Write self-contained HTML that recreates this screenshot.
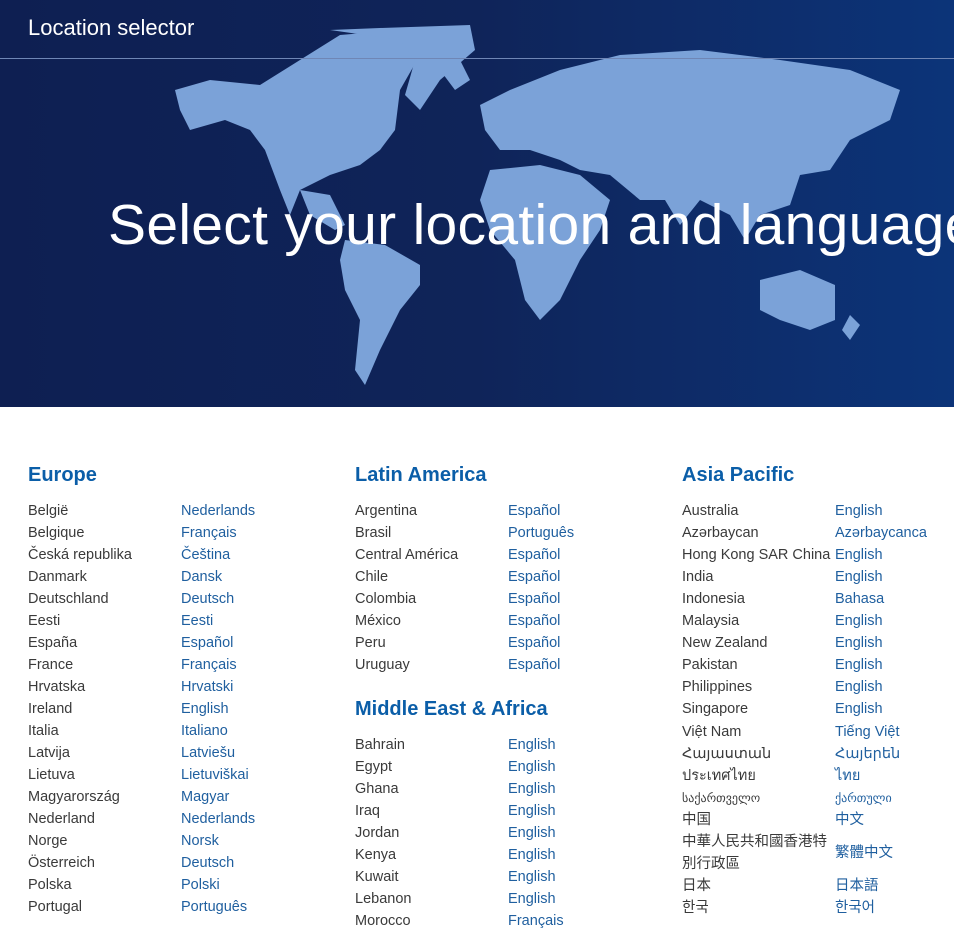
<!DOCTYPE html>
<html><head><meta charset="utf-8"><style>
*{margin:0;padding:0;box-sizing:border-box}
body{width:954px;height:917px;overflow:hidden;background:#fff;font-family:"Liberation Sans","Noto Sans CJK SC",sans-serif}
.hero{position:relative;height:407px;background:linear-gradient(90deg,#0e1f52 0%,#0f2459 50%,#0c3479 100%);overflow:hidden}
.hero svg{position:absolute;left:0;top:0}
.top{position:absolute;left:28px;top:15px;color:#fff;font-size:22px}
.line{position:absolute;left:0;right:0;top:58px;height:1px;background:#6f86b5}
.h1{position:absolute;left:108px;top:192px;color:#fff;font-size:57px;white-space:nowrap;letter-spacing:0.3px}
.col{position:absolute;top:462px;width:300px}
h2{font-size:20px;color:#0b5ea8;font-weight:bold;height:38px;line-height:26px}
.r{display:flex;font-size:14.5px;line-height:22px;color:#3a3a3a}
.r span:first-child{width:153px;flex:none}
.r span+span{color:#1f5f9f}
</style></head><body>
<div class="hero">
<svg width="954" height="407" viewBox="0 0 954 407">
<g fill="#7ba2d8">
<path d="M175 90 L210 80 L260 85 L300 60 L340 35 L400 30 L420 55 L400 90 L395 130 L380 150 L360 165 L330 175 L300 190 L290 215 L280 190 L265 150 L250 130 L225 120 L190 130 L180 110Z"/>
<path d="M330 30 L380 28 L470 25 L475 50 L440 80 L420 110 L405 95 L415 60 L400 40Z"/>
<path d="M300 190 L330 195 L345 225 L335 230 L310 215Z"/>
<path d="M345 240 L385 245 L420 265 L420 285 L400 310 L380 350 L365 385 L355 370 L360 320 L345 290 L340 260Z"/>
<path d="M480 105 L510 90 L560 70 L620 55 L700 50 L780 60 L850 70 L900 90 L890 120 L850 140 L830 170 L800 175 L790 205 L760 215 L745 240 L730 215 L700 200 L680 225 L665 200 L640 200 L610 175 L580 170 L560 160 L530 150 L500 150 L485 130Z"/>
<path d="M490 170 L540 165 L580 175 L610 200 L600 230 L580 260 L560 300 L540 320 L525 300 L515 260 L490 230 L480 200Z"/>
<path d="M760 280 L800 270 L835 285 L835 320 L810 330 L780 320 L760 310Z"/>
<path d="M850 315 L860 325 L850 340 L842 330Z"/>
<path d="M440 70 L460 60 L470 80 L455 90Z"/>
</g></svg>
<div class="top">Location selector</div>
<div class="line"></div>
<div class="h1">Select your location and language</div>
</div>
<div class="col" style="left:28px"><h2>Europe</h2>
<div class="r"><span>België</span><span>Nederlands</span></div>
<div class="r"><span>Belgique</span><span>Français</span></div>
<div class="r"><span>Česká republika</span><span>Čeština</span></div>
<div class="r"><span>Danmark</span><span>Dansk</span></div>
<div class="r"><span>Deutschland</span><span>Deutsch</span></div>
<div class="r"><span>Eesti</span><span>Eesti</span></div>
<div class="r"><span>España</span><span>Español</span></div>
<div class="r"><span>France</span><span>Français</span></div>
<div class="r"><span>Hrvatska</span><span>Hrvatski</span></div>
<div class="r"><span>Ireland</span><span>English</span></div>
<div class="r"><span>Italia</span><span>Italiano</span></div>
<div class="r"><span>Latvija</span><span>Latviešu</span></div>
<div class="r"><span>Lietuva</span><span>Lietuviškai</span></div>
<div class="r"><span>Magyarország</span><span>Magyar</span></div>
<div class="r"><span>Nederland</span><span>Nederlands</span></div>
<div class="r"><span>Norge</span><span>Norsk</span></div>
<div class="r"><span>Österreich</span><span>Deutsch</span></div>
<div class="r"><span>Polska</span><span>Polski</span></div>
<div class="r"><span>Portugal</span><span>Português</span></div>
</div>
<div class="col" style="left:355px"><h2>Latin America</h2>
<div class="r"><span>Argentina</span><span>Español</span></div>
<div class="r"><span>Brasil</span><span>Português</span></div>
<div class="r"><span>Central América</span><span>Español</span></div>
<div class="r"><span>Chile</span><span>Español</span></div>
<div class="r"><span>Colombia</span><span>Español</span></div>
<div class="r"><span>México</span><span>Español</span></div>
<div class="r"><span>Peru</span><span>Español</span></div>
<div class="r"><span>Uruguay</span><span>Español</span></div>
<h2 style="margin-top:20px">Middle East &amp; Africa</h2>
<div class="r"><span>Bahrain</span><span>English</span></div>
<div class="r"><span>Egypt</span><span>English</span></div>
<div class="r"><span>Ghana</span><span>English</span></div>
<div class="r"><span>Iraq</span><span>English</span></div>
<div class="r"><span>Jordan</span><span>English</span></div>
<div class="r"><span>Kenya</span><span>English</span></div>
<div class="r"><span>Kuwait</span><span>English</span></div>
<div class="r"><span>Lebanon</span><span>English</span></div>
<div class="r"><span>Morocco</span><span>Français</span></div>
</div>
<div class="col" style="left:682px"><h2>Asia Pacific</h2>
<div class="r"><span>Australia</span><span>English</span></div>
<div class="r"><span>Azərbaycan</span><span>Azərbaycanca</span></div>
<div class="r"><span>Hong Kong SAR China</span><span>English</span></div>
<div class="r"><span>India</span><span>English</span></div>
<div class="r"><span>Indonesia</span><span>Bahasa</span></div>
<div class="r"><span>Malaysia</span><span>English</span></div>
<div class="r"><span>New Zealand</span><span>English</span></div>
<div class="r"><span>Pakistan</span><span>English</span></div>
<div class="r"><span>Philippines</span><span>English</span></div>
<div class="r"><span>Singapore</span><span>English</span></div>
<div class="r" style="margin-top:1px"><span>Việt Nam</span><span>Tiếng Việt</span></div>
<div class="r"><span>Հայաստան</span><span>Հայերեն</span></div>
<div class="r"><span>ประเทศไทย</span><span>ไทย</span></div>
<div class="r" style="font-size:12px"><span>საქართველო</span><span>ქართული</span></div>
<div class="r"><span>中国</span><span>中文</span></div>
<div class="r" style="align-items:center"><span style="width:150px;margin-right:3px">中華人民共和國香港特別行政區</span><span>繁體中文</span></div>
<div class="r"><span>日本</span><span>日本語</span></div>
<div class="r"><span>한국</span><span>한국어</span></div>
</div>
</body></html>
